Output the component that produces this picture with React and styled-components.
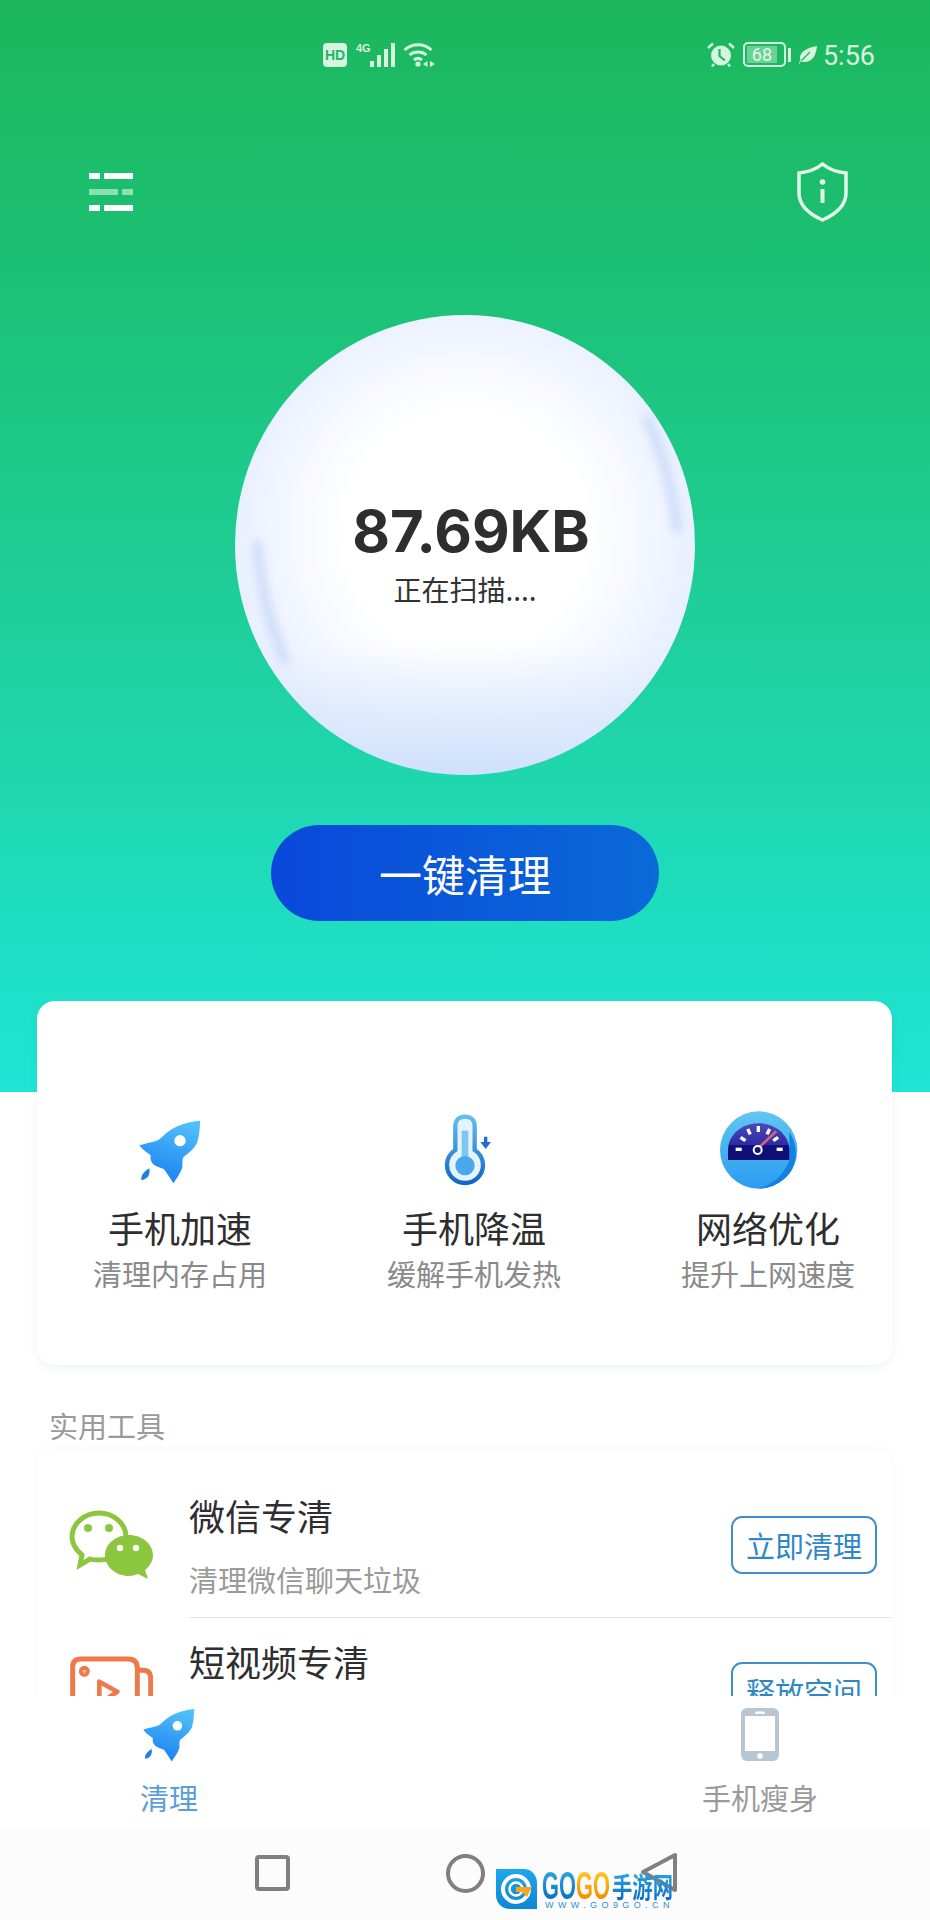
import React from 'react';
import styled, { createGlobalStyle } from 'styled-components';

const CJK = `"Noto Sans CJK SC", "Noto Sans", sans-serif`;

const features = [
  { icon: 'rocket', title: '手机加速', desc: '清理内存占用' },
  { icon: 'thermo', title: '手机降温', desc: '缓解手机发热' },
  { icon: 'gauge', title: '网络优化', desc: '提升上网速度' },
];

const RocketIcon = ({ idPrefix, viewBox = '0 0 300 300', size = 100 }) => (
  <svg width={size} height={size} viewBox={viewBox}>
    <defs>
      <linearGradient id={`${idPrefix}-body`} x1="0.7" y1="0" x2="0.4" y2="1">
        <stop offset="0" stopColor="#52c0fb" />
        <stop offset="1" stopColor="#1a80f2" />
      </linearGradient>
    </defs>
    <path
      fill={`url(#${idPrefix}-body)`}
      d="M240 62 C205 66 170 74 140 98 C128 108 120 118 110 122 C92 128 74 130 58 136 C68 150 82 158 92 166 C90 178 94 190 104 196 C114 202 124 204 132 208 C142 222 152 236 160 250 C170 234 184 216 187 200 C188 188 186 178 190 172 C206 158 224 146 232 126 C238 106 240 84 240 62 Z"
    />
    <path fill="#1f7fe0" d="M88 205 C76 212 62 224 64 240 C80 240 92 226 88 205 Z" />
    <circle cx="180" cy="122" r="17" fill="#fff" />
  </svg>
);

const ThermoIcon = () => (
  <svg width="100" height="100" viewBox="0 0 300 300">
    <defs>
      <linearGradient id="thermo-ring" x1="0" y1="0" x2="0" y2="1">
        <stop offset="0" stopColor="#62bdf2" />
        <stop offset="1" stopColor="#1266c6" />
      </linearGradient>
    </defs>
    <path
      fill="#e4f3fc"
      stroke="url(#thermo-ring)"
      strokeWidth="13"
      d="M124 78 C124 60 136 50 153 50 C170 50 182 60 182 78 L182 150 C198 160 207 176 207 195 C207 225 183 249 153 249 C123 249 99 225 99 195 C99 176 108 160 124 150 Z"
    />
    <rect x="143" y="92" width="20" height="90" fill="#7cc6f2" />
    <circle cx="153" cy="197" r="29" fill="#4aa9ec" />
    <path fill="#1e6fc8" d="M210 110 H220 V126 H231 L215 147 L199 126 H210 Z" />
  </svg>
);

const GaugeIcon = () => (
  <svg width="100" height="100" viewBox="24 0 300 300">
    <defs>
      <linearGradient id="gauge-disc" x1="0" y1="0" x2="0" y2="1">
        <stop offset="0" stopColor="#62c6f2" />
        <stop offset="1" stopColor="#2a9cf0" />
      </linearGradient>
      <linearGradient id="gauge-face" x1="0" y1="0" x2="0" y2="1">
        <stop offset="0" stopColor="#4a48bd" />
        <stop offset="0.58" stopColor="#2e2ca0" />
        <stop offset="0.59" stopColor="#10107a" />
        <stop offset="1" stopColor="#0d0d72" />
      </linearGradient>
    </defs>
    <circle cx="176" cy="150" r="116" fill="url(#gauge-disc)" />
    <path fill="#1480e4" d="M268 96 C292 130 298 190 262 228 C232 258 198 266 176 266 C210 256 250 232 268 180 Z" />
    <path fill="url(#gauge-face)" d="M84 180 V152 C84 104 126 70 176 70 C226 70 268 104 268 152 V180 Z" />
    <g fill="#fff">
      <rect x="107" y="143" width="18" height="10" />
      <rect x="230" y="143" width="18" height="10" />
      <rect x="120" y="112" width="18" height="10" transform="rotate(35 129 117)" />
      <rect x="138" y="90" width="18" height="10" transform="rotate(65 147 95)" />
      <rect x="166" y="82" width="18" height="10" transform="rotate(90 175 87)" />
      <rect x="196" y="90" width="18" height="10" transform="rotate(115 205 95)" />
      <rect x="218" y="112" width="18" height="10" transform="rotate(145 227 117)" />
    </g>
    <path stroke="#d8627c" strokeWidth="8" strokeLinecap="round" d="M178 142 L226 96" />
    <circle cx="173" cy="150" r="12" fill="#12127c" stroke="#fff" strokeWidth="6" />
  </svg>
);

const featureIcons = {
  rocket: <RocketIcon idPrefix="feature" />,
  thermo: <ThermoIcon />,
  gauge: <GaugeIcon />,
};

const WechatIcon = () => (
  <svg width="84" height="70" viewBox="0 0 84 70">
    <path
      fill="#fff"
      stroke="#8cc63f"
      strokeWidth="5"
      d="M30 3 C45 3 57 14 57 27 C57 40 45 50 30 50 C27 50 24 50 21 49 L11 55 L13 45 C7 40 3 34 3 27 C3 14 15 3 30 3 Z"
    />
    <path
      fill="#8cc63f"
      d="M60 25 C73 25 84 34 84 45 C84 51 81 56 76 60 L79 69 L69 64 C66 65 63 66 60 66 C47 66 36 57 36 45 C36 34 47 25 60 25 Z"
    />
    <circle cx="19" cy="18" r="4" fill="#8cc63f" />
    <circle cx="40" cy="18" r="4" fill="#8cc63f" />
    <circle cx="51" cy="38" r="3.2" fill="#fff" />
    <circle cx="67" cy="38" r="3.2" fill="#fff" />
  </svg>
);

const VideoIcon = () => (
  <svg width="84" height="70" viewBox="27 21 252 210" fill="none" stroke="#ee7a4c" strokeWidth="15">
    <path d="M38 150 V54 Q38 30 62 30 H205 Q232 30 232 58 V150" />
    <path d="M232 64 H250 Q272 64 272 88 V150" />
    <circle cx="73" cy="67" r="11" fill="#f8b79c" strokeWidth="11" />
    <path strokeLinejoin="round" strokeWidth="14" d="M118 150 V98 L172 128 L140 150" />
  </svg>
);

const PhoneIcon = () => (
  <svg width="56" height="56" viewBox="0 0 56 56">
    <rect x="9" y="1" width="38" height="53" rx="6" fill="#b8c6d2" />
    <rect x="13" y="9" width="30" height="35" fill="#fff" />
    <rect x="23" y="4.5" width="10" height="2.5" rx="1.2" fill="#fff" />
    <circle cx="28" cy="49" r="2.8" fill="#fff" />
  </svg>
);

const WifiIcon = () => (
  <svg width="32" height="24" viewBox="0 0 32 24" fill="none" stroke="#d6f5df" strokeWidth="3">
    <path d="M1.500 7 C9 0 21 0 28.500 7" />
    <path d="M6.500 12 C11 8 19 8 23.500 12" />
    <path d="M11 17 C13.500 15 16.500 15 19 17" />
    <circle cx="15" cy="21" r="2.600" fill="#d6f5df" stroke="none" />
    <path fill="#d6f5df" stroke="none" d="M20 21 L24.500 18 V24 Z M32 21 L27 18 V24 Z" />
  </svg>
);

const AlarmIcon = () => (
  <svg width="28" height="25" viewBox="0 0 28 25">
    <circle cx="14" cy="13.500" r="10" fill="#d6f5df" />
    <path d="M1 6 L6 1.500 M27 6 L22 1.500 M7 22 L5 24.500 M21 22 L23 24.500" stroke="#d6f5df" strokeWidth="2.400" />
    <path d="M12.500 7 V14 L18 18.500" fill="none" stroke="#1fb766" strokeWidth="2.200" />
  </svg>
);

const LeafIcon = () => (
  <svg width="18" height="18" viewBox="0 0 18 18">
    <path fill="#d6f5df" d="M18 0 C17 9 14 16 5 16 C3.500 16 2.500 15.500 2 15 L0.500 18 L0 17 L1.500 14 C-1 8 6 2 18 0 Z" />
    <path stroke="#1fb766" strokeWidth="1.200" d="M2.500 14.500 L11 6" />
  </svg>
);

const MenuIcon = () => (
  <MenuList>
    <MenuRow>
      <MenuDot />
      <MenuBar />
    </MenuRow>
    <MenuRow $dim>
      <MenuBar />
      <MenuDot />
    </MenuRow>
    <MenuRow>
      <MenuDot />
      <MenuBar />
    </MenuRow>
  </MenuList>
);

const ShieldIcon = () => (
  <svg width="51" height="60" viewBox="0 0 51 60" fill="none" stroke="#e3f8ea" strokeWidth="3.500">
    <path d="M25.500 2 C31 6.500 39 10 49 11 V31 C49 43 39 52 25.500 58 C12 52 2 43 2 31 V11 C12 10 20 6.500 25.500 2 Z" />
    <circle cx="25.500" cy="20" r="2.800" fill="#e3f8ea" stroke="none" />
    <path strokeWidth="4" d="M25.500 27 V41" />
  </svg>
);

const SphereGlints = () => (
  <GlintLayer width="460" height="460" viewBox="0 0 460 460" fill="none">
    <defs>
      <filter id="glint-blur" x="-50%" y="-50%" width="200%" height="200%">
        <feGaussianBlur stdDeviation="5" />
      </filter>
    </defs>
    <g filter="url(#glint-blur)" stroke="#aec6f5" strokeWidth="8" strokeLinecap="round" opacity="0.6">
      <path d="M22 229 C26 270 34 310 50 345" />
      <path d="M412 104 C426 136 438 172 442 214" />
    </g>
  </GlintLayer>
);

const GogoMark = () => (
  <Watermark>
    <svg width="41" height="40" viewBox="0 0 41 40">
      <defs>
        <linearGradient id="mark-tile" x1="0" y1="0" x2="0" y2="1">
          <stop offset="0" stopColor="#1ea6ea" />
          <stop offset="1" stopColor="#0f86d6" />
        </linearGradient>
      </defs>
      <path fill="url(#mark-tile)" d="M0 0 H28 C35 0 41 6 41 14 V40 H14 C6 40 0 34 0 26 Z" />
      <circle cx="20" cy="20" r="13" fill="none" stroke="#fff" strokeWidth="4" />
      <circle cx="20" cy="20" r="6.500" fill="none" stroke="#fff" strokeWidth="2.500" />
      <path fill="#f6a623" d="M20 18 H36 L31 28 L26 23 H20 Z" />
    </svg>
    <MarkText>
      <MarkTitle>
        <MarkWord>GO</MarkWord>
        <MarkWord $orange>GO</MarkWord>
        <MarkCjk>手游网</MarkCjk>
      </MarkTitle>
      <MarkUrl>WWW.GO9GO.CN</MarkUrl>
    </MarkText>
  </Watermark>
);

const App = () => (
  <Page>
    <GlobalStyle />
    <Hero>
      <StatusBar>
        <StatusGroup>
          <HdBadge>HD</HdBadge>
          <Signal>
            <NetLabel>4G</NetLabel>
            <SignalBars>
              <SignalBar $height={6} />
              <SignalBar $height={12} />
              <SignalBar $height={18} />
              <SignalBar $height={24} />
            </SignalBars>
          </Signal>
          <WifiIcon />
        </StatusGroup>
        <StatusGroup>
          <AlarmIcon />
          <Battery>
            <BatteryShell>
              <BatteryLevel>68</BatteryLevel>
            </BatteryShell>
            <BatteryCap />
          </Battery>
          <LeafIcon />
          <Clock>5:56</Clock>
        </StatusGroup>
      </StatusBar>
      <Toolbar>
        <MenuIcon />
        <ShieldIcon />
      </Toolbar>
      <Sphere>
        <SphereGlints />
        <SizeValue>87.69KB</SizeValue>
        <ScanText>正在扫描....</ScanText>
      </Sphere>
      <CleanButton>一键清理</CleanButton>
    </Hero>
    <Scroller>
      <FeatureCard>
        {features.map((item) => (
          <Feature key={item.icon}>
            <FeatureIconBox>{featureIcons[item.icon]}</FeatureIconBox>
            <FeatureTitle>{item.title}</FeatureTitle>
            <FeatureDesc>{item.desc}</FeatureDesc>
          </Feature>
        ))}
      </FeatureCard>
      <SectionLabel>实用工具</SectionLabel>
      <ToolCard>
        <ToolRow>
          <ToolIcon><WechatIcon /></ToolIcon>
          <ToolBody>
            <ToolText>
              <ToolTitle>微信专清</ToolTitle>
              <ToolDesc>清理微信聊天垃圾</ToolDesc>
            </ToolText>
            <ToolButton>立即清理</ToolButton>
          </ToolBody>
        </ToolRow>
        <ToolRow>
          <ToolIcon><VideoIcon /></ToolIcon>
          <ToolBody>
            <ToolText>
              <ToolTitle>短视频专清</ToolTitle>
            </ToolText>
            <ToolButton>释放空间</ToolButton>
          </ToolBody>
        </ToolRow>
      </ToolCard>
    </Scroller>
    <TabBar>
      <Tab>
        <TabIconBox><RocketIcon idPrefix="tab" viewBox="50 55 200 200" size={56} /></TabIconBox>
        <TabLabel $active>清理</TabLabel>
      </Tab>
      <Tab>
        <TabIconBox><PhoneIcon /></TabIconBox>
        <TabLabel>手机瘦身</TabLabel>
      </Tab>
    </TabBar>
    <NavBar>
      <NavSquare />
      <NavCircle />
      <svg width="40" height="42" viewBox="0 0 40 42" fill="none">
        <path d="M37 3 V38 L5 20 Z" stroke="#808080" strokeWidth="4" strokeLinejoin="round" />
      </svg>
      <GogoMark />
    </NavBar>
  </Page>
);

const GlobalStyle = createGlobalStyle`
  html, body {
    margin: 0;
    padding: 0;
    background: #fff;
  }
  body {
    font-family: ${CJK};
  }
`;

const Page = styled.div`
  display: flex;
  flex-direction: column;
  height: 1920px;
  overflow: hidden;
  position: relative;
  width: 930px;
`;

const Hero = styled.header`
  align-items: center;
  background: linear-gradient(180deg, #1cb75d 0%, #1cc073 24%, #1fd19f 60%, #1ee5d6 100%);
  display: flex;
  flex-direction: column;
  flex: none;
  height: 1092px;
`;

const StatusBar = styled.div`
  align-items: center;
  box-sizing: border-box;
  color: #d6f5df;
  display: flex;
  height: 25px;
  justify-content: space-between;
  margin-top: 42px;
  padding: 0 55px 0 323px;
  width: 100%;
`;

const StatusGroup = styled.div`
  align-items: center;
  display: flex;
  gap: 8px;
`;

const HdBadge = styled.span`
  align-items: center;
  background: #d6f5df;
  border-radius: 4px;
  color: #1fb766;
  display: flex;
  font-family: "Liberation Sans", sans-serif;
  font-size: 14px;
  font-weight: 700;
  height: 24px;
  justify-content: center;
  width: 24px;
`;

const Signal = styled.div`
  align-items: flex-start;
  display: flex;
  margin-left: 1px;
`;

const NetLabel = styled.span`
  font-family: "Liberation Sans", sans-serif;
  font-size: 11px;
  font-weight: 700;
  line-height: 11px;
  width: 14px;
`;

const SignalBars = styled.div`
  align-items: flex-end;
  display: flex;
  gap: 3px;
  height: 24px;
`;

const SignalBar = styled.span`
  background: #d6f5df;
  display: block;
  height: ${(props) => props.$height}px;
  width: 4px;
`;

const Battery = styled.div`
  align-items: center;
  display: flex;
  gap: 2px;
`;

const BatteryShell = styled.div`
  border: 2px solid #d6f5df;
  border-radius: 5px;
  box-sizing: border-box;
  height: 25px;
  padding: 2px;
  width: 43px;
`;

const BatteryLevel = styled.div`
  background: rgba(214, 245, 223, 0.42);
  color: #e3f8ea;
  font-family: "Roboto", sans-serif;
  font-size: 18px;
  height: 17px;
  line-height: 17px;
  text-align: center;
  width: 30px;
`;

const BatteryCap = styled.span`
  background: #d6f5df;
  display: block;
  height: 14px;
  width: 3px;
`;

const Clock = styled.span`
  font-family: "Roboto", sans-serif;
  font-size: 27px;
  line-height: 25px;
  margin-left: -2px;
  padding-top: 4px;
`;

const Toolbar = styled.div`
  align-items: center;
  box-sizing: border-box;
  display: flex;
  height: 60px;
  justify-content: space-between;
  margin-top: 95px;
  padding: 0 82px 0 89px;
  width: 100%;
`;

const MenuList = styled.div`
  display: flex;
  flex-direction: column;
  gap: 10px;
  width: 44px;
`;

const MenuRow = styled.div`
  display: flex;
  justify-content: space-between;
  opacity: ${(props) => (props.$dim ? 0.5 : 1)};
`;

const MenuDot = styled.span`
  background: #fff;
  height: 6px;
  width: 11px;
`;

const MenuBar = styled.span`
  background: #fff;
  height: 6px;
  width: 29px;
`;

const Sphere = styled.div`
  align-items: center;
  background:
    radial-gradient(ellipse 70% 30% at 50% 100%, rgba(190, 215, 250, 0.6), rgba(190, 215, 250, 0) 100%),
    radial-gradient(circle at 50% 47%, #fff 0, #fff 36%, #f2f6ff 56%, #e0eafd 80%, #d8e5fc 96%, #e2ecfe 100%);
  border-radius: 50%;
  box-sizing: border-box;
  display: flex;
  flex-direction: column;
  flex: none;
  height: 460px;
  justify-content: center;
  margin-top: 93px;
  padding-top: 18px;
  position: relative;
  width: 460px;
`;

const GlintLayer = styled.svg`
  left: 0;
  position: absolute;
  top: 0;
`;

const SizeValue = styled.div`
  color: #2e2e30;
  font-family: "Inter", sans-serif;
  font-size: 58px;
  font-weight: 700;
  line-height: 64px;
  margin-left: 12px;
  position: relative;
`;

const ScanText = styled.div`
  color: #333;
  font-size: 28px;
  line-height: 40px;
  margin-top: 6px;
  position: relative;
`;

const CleanButton = styled.button`
  background: linear-gradient(90deg, #0a48da 0%, #0a6ad8 100%);
  border: 0;
  border-radius: 48px;
  color: #fff;
  flex: none;
  font-family: ${CJK};
  font-size: 43px;
  height: 96px;
  margin-top: 50px;
  padding: 0;
  width: 388px;
`;

const Scroller = styled.main`
  flex: 1;
  margin-top: -91px;
  min-height: 0;
  overflow: hidden;
  padding: 0 38px 0 37px;
  position: relative;
`;

const FeatureCard = styled.section`
  background: #fff;
  border-radius: 18px;
  box-shadow: 0 3px 10px rgba(60, 90, 120, 0.08);
  box-sizing: border-box;
  display: flex;
  gap: 94px;
  height: 364px;
  padding: 99px 0 0 43px;
`;

const Feature = styled.div`
  align-items: center;
  display: flex;
  flex-direction: column;
  flex: none;
  width: 200px;
`;

const FeatureIconBox = styled.div`
  height: 100px;
  margin-right: 20px;
  width: 100px;
`;

const FeatureTitle = styled.div`
  color: #2e2e30;
  font-size: 36px;
  line-height: 48px;
  margin-top: 3px;
`;

const FeatureDesc = styled.div`
  color: #8a8a8a;
  font-size: 29px;
  line-height: 40px;
  margin-top: 2px;
  white-space: nowrap;
`;

const SectionLabel = styled.div`
  color: #9a9a9a;
  font-size: 29px;
  line-height: 40px;
  margin-top: 40px;
  padding-left: 12px;
`;

const ToolCard = styled.section`
  border-radius: 12px 12px 0 0;
  box-shadow: 0 0 10px rgba(60, 90, 120, 0.035);
  margin-top: 5px;
  padding-top: 22px;
`;

const ToolRow = styled.div`
  display: flex;
  height: 146px;
`;

const ToolIcon = styled.div`
  flex: none;
  height: 70px;
  margin: 38px 36px 0 32px;
  width: 84px;
`;

const ToolBody = styled.div`
  align-items: center;
  border-bottom: 1px solid #e6e6e6;
  box-sizing: border-box;
  display: flex;
  flex: 1;
  height: 146px;
  justify-content: space-between;
  padding-right: 15px;
`;

const ToolText = styled.div`
  align-self: flex-start;
  padding-top: 19px;
`;

const ToolTitle = styled.div`
  color: #2e2e30;
  font-size: 36px;
  line-height: 48px;
`;

const ToolDesc = styled.div`
  color: #9a9a9a;
  font-size: 29px;
  line-height: 40px;
  margin-top: 20px;
`;

const ToolButton = styled.button`
  background: #fff;
  border: 2.5px solid #3f8fca;
  border-radius: 11px;
  box-sizing: border-box;
  color: #2f87c6;
  flex: none;
  font-family: ${CJK};
  font-size: 29px;
  height: 58px;
  padding: 0;
  width: 146px;
`;

const TabBar = styled.nav`
  background: #fff;
  box-sizing: border-box;
  display: flex;
  flex: none;
  height: 134px;
  justify-content: space-between;
  padding: 11px 70px 0 69px;
`;

const Tab = styled.div`
  align-items: center;
  display: flex;
  flex-direction: column;
  width: 200px;
`;

const TabIconBox = styled.div`
  height: 56px;
  width: 56px;
`;

const TabLabel = styled.div`
  color: ${(props) => (props.$active ? '#5a9fd6' : '#9a9a9a')};
  font-size: 29px;
  line-height: 40px;
  margin-top: 14px;
`;

const NavBar = styled.div`
  align-items: center;
  background: #fcfcfc;
  box-sizing: border-box;
  display: flex;
  flex: none;
  gap: 153px;
  height: 90px;
  justify-content: center;
  padding-bottom: 4px;
  position: relative;
`;

const NavSquare = styled.span`
  border: 4px solid #808080;
  border-radius: 4px;
  box-sizing: border-box;
  display: block;
  height: 36px;
  margin: 0 2.5px;
  width: 35px;
`;

const NavCircle = styled.span`
  border: 4px solid #808080;
  border-radius: 50%;
  box-sizing: border-box;
  display: block;
  height: 39px;
  margin: 0 0.5px;
  width: 39px;
`;

const Watermark = styled.div`
  display: flex;
  gap: 5px;
  left: 496px;
  position: absolute;
  top: 39px;
`;

const MarkText = styled.div`
  display: flex;
  flex-direction: column;
  padding-top: 2px;
`;

const MarkTitle = styled.div`
  display: flex;
  height: 30px;
  line-height: 30px;
`;

const MarkWord = styled.span`
  background: ${(props) => (props.$orange
    ? 'linear-gradient(180deg, #ffc81e, #f38a00)'
    : 'linear-gradient(180deg, #2aa5e6, #0a6fc2)')};
  -webkit-background-clip: text;
  background-clip: text;
  color: transparent;
  font-family: "Liberation Sans", sans-serif;
  font-size: 38px;
  font-weight: 700;
  margin-right: -25px;
  transform: scaleX(0.575);
  transform-origin: left center;
  width: 59px;
`;

const MarkCjk = styled.span`
  background: linear-gradient(180deg, #2aa5e6, #0a6fc2);
  -webkit-background-clip: text;
  background-clip: text;
  color: transparent;
  font-family: ${CJK};
  font-size: 28px;
  font-weight: 700;
  margin-left: 2px;
  transform: scaleX(0.726);
  transform-origin: left center;
  white-space: nowrap;
`;

const MarkUrl = styled.div`
  color: #2c8fd0;
  font-family: "Liberation Sans", sans-serif;
  font-size: 9px;
  letter-spacing: 4.4px;
  line-height: 9px;
  margin-left: 3px;
  white-space: nowrap;
`;

export default App;
